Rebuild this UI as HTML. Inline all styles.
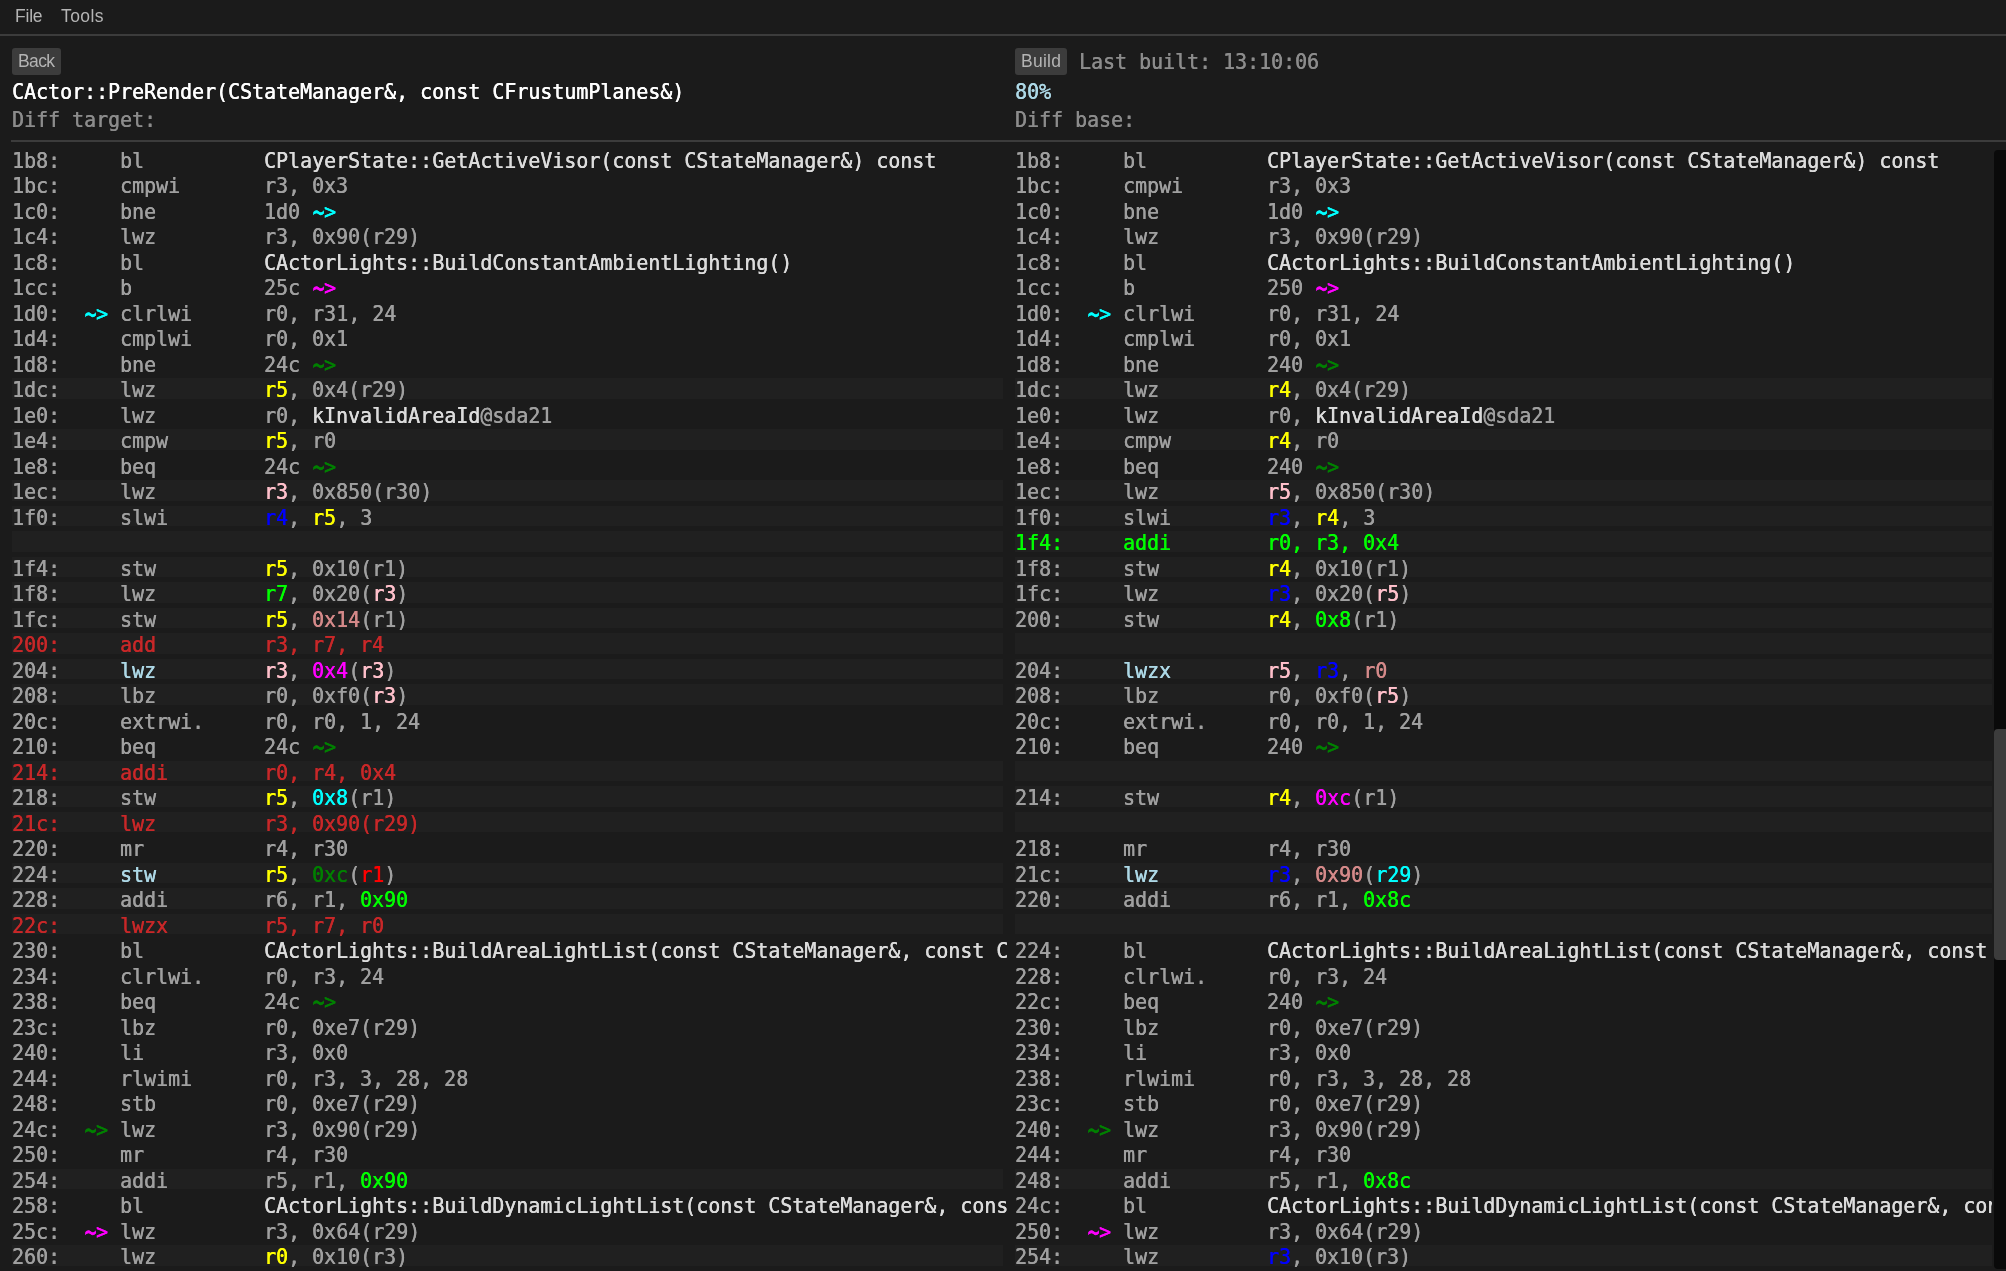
<!DOCTYPE html>
<html lang="en">
<head>
<meta charset="utf-8">
<title>objdiff</title>
<style>
html,body{margin:0;padding:0;background:#1b1b1b;}
body{width:2006px;height:1271px;overflow:hidden;position:relative;}
#app{position:absolute;left:0;top:0;width:2006px;height:1271px;overflow:hidden;background:#1b1b1b;
 font-family:"DejaVu Sans Mono","Liberation Mono",monospace;font-size:19.945px;color:#a0a0a0;}
#menubar{will-change:transform;position:absolute;left:0;top:0;width:2006px;height:35px;}
.mi{position:absolute;top:5px;font-family:"Liberation Sans",sans-serif;font-size:17.5px;line-height:22px;color:#b4b4b4;}
#menusep{position:absolute;left:0;top:34px;width:2006px;height:1.5px;background:#3c3c3c;}
#hsep{position:absolute;left:11px;top:140px;width:1995px;height:1.5px;background:#3c3c3c;}
#leftpane{will-change:transform;position:absolute;left:0;top:0;width:1008px;height:1271px;overflow:hidden;}
#rightpane{will-change:transform;position:absolute;left:1003px;top:0;width:988.5px;height:1271px;overflow:hidden;}
#leftpane .rows{position:absolute;left:12px;top:0;width:991px;}
#rightpane .rows{position:absolute;left:12px;top:0;width:977px;}
.btn{position:absolute;top:48px;height:26.5px;background:#3c3c3c;border-radius:3px;font-family:"Liberation Sans",sans-serif;font-size:17.5px;color:#b4b4b4;}
.btn span{position:absolute;left:6px;top:2px;line-height:22px;}
#back{left:12px;width:49px;letter-spacing:-0.6px;}
#build{left:12px;width:52px;letter-spacing:0.25px;}
.hl{position:absolute;left:12px;white-space:pre;line-height:24px;height:24px;color:#fff;transform:scaleY(1.05);transform-origin:0 19px;}
.dim{color:#8c8c8c;}
#fname{top:80px;}
#dt{top:108px;}
#lb{left:76px;top:50px;}
#pct{top:80px;color:#add8e6;}
#db{top:108px;}
.s{color:#dcdcdc;}
.y{color:#ffff00;}
.p{color:#ffc0cb;}
.b{color:#0000ff;}
.g{color:#00ff00;}
.dg{color:#008000;}
.m{color:#ff00ff;}
.c{color:#00ffff;}
.r{color:#ff0000;}
.sa{color:#d58a8a;}
.lb{color:#add8e6;}
.del,.del span{color:#c82829;}
.ins,.ins span{color:#00ff00;}
#strack{position:absolute;left:1994px;top:150px;width:16px;height:1119px;background:#0a0a0a;border-radius:4px;}
#sthumb{position:absolute;left:1994px;top:728.5px;width:16px;height:231px;background:#3c3c3c;border-radius:4px;}
.ti{display:inline-block;transform:translate(0.5px,0.3px) scaleY(1.4);transform-origin:50% 12.7px;}
.f{position:absolute;left:0;width:100%;height:20.7px;background:#202020;}
.t{position:absolute;left:0;white-space:pre;line-height:24px;height:24px;transform:scaleY(1.05);transform-origin:0 19px;}
.t,.hl{-webkit-text-stroke:0.2px;}
.t,.hl{text-shadow:0.25px 0 0 currentColor;}

</style>
</head>
<body>
<div id="app">
<div id="menubar"><span class="mi" style="left:15px;letter-spacing:-0.2px">File</span><span class="mi" style="left:61px;letter-spacing:0.4px">Tools</span></div>
<div id="menusep"></div>

<div id="leftpane">
<div class="btn" id="back"><span>Back</span></div>
<div class="hl" id="fname">CActor::PreRender(CStateManager&amp;, const CFrustumPlanes&amp;)</div>
<div class="hl dim" id="dt">Diff target:</div>
<div class="rows">
<div class="t" style="top:149px">1b8:     bl          <span class="s">CPlayerState::GetActiveVisor(const CStateManager&amp;) const</span></div>
<div class="t" style="top:174px">1bc:     cmpwi       r3, 0x3</div>
<div class="t" style="top:200px">1c0:     bne         1d0 <span class="c"><span class="ti">~</span>&gt;</span></div>
<div class="t" style="top:225px">1c4:     lwz         r3, 0x90(r29)</div>
<div class="t" style="top:251px">1c8:     bl          <span class="s">CActorLights::BuildConstantAmbientLighting()</span></div>
<div class="t" style="top:276px">1cc:     b           25c <span class="m"><span class="ti">~</span>&gt;</span></div>
<div class="t" style="top:302px">1d0:  <span class="c"><span class="ti">~</span>&gt;</span> clrlwi      r0, r31, 24</div>
<div class="t" style="top:327px">1d4:     cmplwi      r0, 0x1</div>
<div class="t" style="top:353px">1d8:     bne         24c <span class="dg"><span class="ti">~</span>&gt;</span></div>
<div class="f" style="top:378.3px"></div>
<div class="t" style="top:378px">1dc:     lwz         <span class="y">r5</span>, 0x4(r29)</div>
<div class="t" style="top:404px">1e0:     lwz         r0, <span class="s">kInvalidAreaId</span>@sda21</div>
<div class="f" style="top:429.3px"></div>
<div class="t" style="top:429px">1e4:     cmpw        <span class="y">r5</span>, r0</div>
<div class="t" style="top:455px">1e8:     beq         24c <span class="dg"><span class="ti">~</span>&gt;</span></div>
<div class="f" style="top:480.3px"></div>
<div class="t" style="top:480px">1ec:     lwz         <span class="p">r3</span>, 0x850(r30)</div>
<div class="f" style="top:505.8px"></div>
<div class="t" style="top:506px">1f0:     slwi        <span class="b">r4</span>, <span class="y">r5</span>, 3</div>
<div class="f" style="top:531.3px"></div>
<div class="f" style="top:556.8px"></div>
<div class="t" style="top:557px">1f4:     stw         <span class="y">r5</span>, 0x10(r1)</div>
<div class="f" style="top:582.3px"></div>
<div class="t" style="top:582px">1f8:     lwz         <span class="g">r7</span>, 0x20(<span class="p">r3</span>)</div>
<div class="f" style="top:607.8px"></div>
<div class="t" style="top:608px">1fc:     stw         <span class="y">r5</span>, <span class="sa">0x14</span>(r1)</div>
<div class="f" style="top:633.3px"></div>
<div class="t del" style="top:633px">200:     add         r3, r7, r4</div>
<div class="f" style="top:658.8px"></div>
<div class="t" style="top:659px">204:     <span class="lb">lwz         </span><span class="p">r3</span>, <span class="m">0x4</span>(<span class="p">r3</span>)</div>
<div class="f" style="top:684.3px"></div>
<div class="t" style="top:684px">208:     lbz         r0, 0xf0(<span class="p">r3</span>)</div>
<div class="t" style="top:710px">20c:     extrwi.     r0, r0, 1, 24</div>
<div class="t" style="top:735px">210:     beq         24c <span class="dg"><span class="ti">~</span>&gt;</span></div>
<div class="f" style="top:760.8px"></div>
<div class="t del" style="top:761px">214:     addi        r0, r4, 0x4</div>
<div class="f" style="top:786.3px"></div>
<div class="t" style="top:786px">218:     stw         <span class="y">r5</span>, <span class="c">0x8</span>(r1)</div>
<div class="f" style="top:811.8px"></div>
<div class="t del" style="top:812px">21c:     lwz         r3, 0x90(r29)</div>
<div class="t" style="top:837px">220:     mr          r4, r30</div>
<div class="f" style="top:862.8px"></div>
<div class="t" style="top:863px">224:     <span class="lb">stw         </span><span class="y">r5</span>, <span class="dg">0xc</span>(<span class="r">r1</span>)</div>
<div class="f" style="top:888.3px"></div>
<div class="t" style="top:888px">228:     addi        r6, r1, <span class="g">0x90</span></div>
<div class="f" style="top:913.8px"></div>
<div class="t del" style="top:914px">22c:     lwzx        r5, r7, r0</div>
<div class="t" style="top:939px">230:     bl          <span class="s">CActorLights::BuildAreaLightList(const CStateManager&amp;, const CGameArea&amp;)</span></div>
<div class="t" style="top:965px">234:     clrlwi.     r0, r3, 24</div>
<div class="t" style="top:990px">238:     beq         24c <span class="dg"><span class="ti">~</span>&gt;</span></div>
<div class="t" style="top:1016px">23c:     lbz         r0, 0xe7(r29)</div>
<div class="t" style="top:1041px">240:     li          r3, 0x0</div>
<div class="t" style="top:1067px">244:     rlwimi      r0, r3, 3, 28, 28</div>
<div class="t" style="top:1092px">248:     stb         r0, 0xe7(r29)</div>
<div class="t" style="top:1118px">24c:  <span class="dg"><span class="ti">~</span>&gt;</span> lwz         r3, 0x90(r29)</div>
<div class="t" style="top:1143px">250:     mr          r4, r30</div>
<div class="f" style="top:1168.8px"></div>
<div class="t" style="top:1169px">254:     addi        r5, r1, <span class="g">0x90</span></div>
<div class="t" style="top:1194px">258:     bl          <span class="s">CActorLights::BuildDynamicLightList(const CStateManager&amp;, const CAABox&amp;)</span></div>
<div class="t" style="top:1220px">25c:  <span class="m"><span class="ti">~</span>&gt;</span> lwz         r3, 0x64(r29)</div>
<div class="f" style="top:1245.3px"></div>
<div class="t" style="top:1245px">260:     lwz         <span class="y">r0</span>, 0x10(r3)</div>
</div>
</div>

<div id="rightpane">
<div class="btn" id="build"><span>Build</span></div>
<div class="hl dim" id="lb">Last built: 13:10:06</div>
<div class="hl" id="pct">80%</div>
<div class="hl dim" id="db">Diff base:</div>
<div class="rows">
<div class="t" style="top:149px">1b8:     bl          <span class="s">CPlayerState::GetActiveVisor(const CStateManager&amp;) const</span></div>
<div class="t" style="top:174px">1bc:     cmpwi       r3, 0x3</div>
<div class="t" style="top:200px">1c0:     bne         1d0 <span class="c"><span class="ti">~</span>&gt;</span></div>
<div class="t" style="top:225px">1c4:     lwz         r3, 0x90(r29)</div>
<div class="t" style="top:251px">1c8:     bl          <span class="s">CActorLights::BuildConstantAmbientLighting()</span></div>
<div class="t" style="top:276px">1cc:     b           250 <span class="m"><span class="ti">~</span>&gt;</span></div>
<div class="t" style="top:302px">1d0:  <span class="c"><span class="ti">~</span>&gt;</span> clrlwi      r0, r31, 24</div>
<div class="t" style="top:327px">1d4:     cmplwi      r0, 0x1</div>
<div class="t" style="top:353px">1d8:     bne         240 <span class="dg"><span class="ti">~</span>&gt;</span></div>
<div class="f" style="top:378.3px"></div>
<div class="t" style="top:378px">1dc:     lwz         <span class="y">r4</span>, 0x4(r29)</div>
<div class="t" style="top:404px">1e0:     lwz         r0, <span class="s">kInvalidAreaId</span>@sda21</div>
<div class="f" style="top:429.3px"></div>
<div class="t" style="top:429px">1e4:     cmpw        <span class="y">r4</span>, r0</div>
<div class="t" style="top:455px">1e8:     beq         240 <span class="dg"><span class="ti">~</span>&gt;</span></div>
<div class="f" style="top:480.3px"></div>
<div class="t" style="top:480px">1ec:     lwz         <span class="p">r5</span>, 0x850(r30)</div>
<div class="f" style="top:505.8px"></div>
<div class="t" style="top:506px">1f0:     slwi        <span class="b">r3</span>, <span class="y">r4</span>, 3</div>
<div class="f" style="top:531.3px"></div>
<div class="t ins" style="top:531px">1f4:     addi        r0, r3, 0x4</div>
<div class="f" style="top:556.8px"></div>
<div class="t" style="top:557px">1f8:     stw         <span class="y">r4</span>, 0x10(r1)</div>
<div class="f" style="top:582.3px"></div>
<div class="t" style="top:582px">1fc:     lwz         <span class="b">r3</span>, 0x20(<span class="p">r5</span>)</div>
<div class="f" style="top:607.8px"></div>
<div class="t" style="top:608px">200:     stw         <span class="y">r4</span>, <span class="g">0x8</span>(r1)</div>
<div class="f" style="top:633.3px"></div>
<div class="f" style="top:658.8px"></div>
<div class="t" style="top:659px">204:     <span class="lb">lwzx        </span><span class="p">r5</span>, <span class="b">r3</span>, <span class="sa">r0</span></div>
<div class="f" style="top:684.3px"></div>
<div class="t" style="top:684px">208:     lbz         r0, 0xf0(<span class="p">r5</span>)</div>
<div class="t" style="top:710px">20c:     extrwi.     r0, r0, 1, 24</div>
<div class="t" style="top:735px">210:     beq         240 <span class="dg"><span class="ti">~</span>&gt;</span></div>
<div class="f" style="top:760.8px"></div>
<div class="f" style="top:786.3px"></div>
<div class="t" style="top:786px">214:     stw         <span class="y">r4</span>, <span class="m">0xc</span>(r1)</div>
<div class="f" style="top:811.8px"></div>
<div class="t" style="top:837px">218:     mr          r4, r30</div>
<div class="f" style="top:862.8px"></div>
<div class="t" style="top:863px">21c:     <span class="lb">lwz         </span><span class="b">r3</span>, <span class="sa">0x90</span>(<span class="c">r29</span>)</div>
<div class="f" style="top:888.3px"></div>
<div class="t" style="top:888px">220:     addi        r6, r1, <span class="g">0x8c</span></div>
<div class="f" style="top:913.8px"></div>
<div class="t" style="top:939px">224:     bl          <span class="s">CActorLights::BuildAreaLightList(const CStateManager&amp;, const CGameArea&amp;)</span></div>
<div class="t" style="top:965px">228:     clrlwi.     r0, r3, 24</div>
<div class="t" style="top:990px">22c:     beq         240 <span class="dg"><span class="ti">~</span>&gt;</span></div>
<div class="t" style="top:1016px">230:     lbz         r0, 0xe7(r29)</div>
<div class="t" style="top:1041px">234:     li          r3, 0x0</div>
<div class="t" style="top:1067px">238:     rlwimi      r0, r3, 3, 28, 28</div>
<div class="t" style="top:1092px">23c:     stb         r0, 0xe7(r29)</div>
<div class="t" style="top:1118px">240:  <span class="dg"><span class="ti">~</span>&gt;</span> lwz         r3, 0x90(r29)</div>
<div class="t" style="top:1143px">244:     mr          r4, r30</div>
<div class="f" style="top:1168.8px"></div>
<div class="t" style="top:1169px">248:     addi        r5, r1, <span class="g">0x8c</span></div>
<div class="t" style="top:1194px">24c:     bl          <span class="s">CActorLights::BuildDynamicLightList(const CStateManager&amp;, const CAABox&amp;)</span></div>
<div class="t" style="top:1220px">250:  <span class="m"><span class="ti">~</span>&gt;</span> lwz         r3, 0x64(r29)</div>
<div class="f" style="top:1245.3px"></div>
<div class="t" style="top:1245px">254:     lwz         <span class="b">r3</span>, 0x10(r3)</div>
</div>
</div>

<div id="hsep"></div>
<div id="strack"></div>
<div id="sthumb"></div>
</div>
</body>
</html>
